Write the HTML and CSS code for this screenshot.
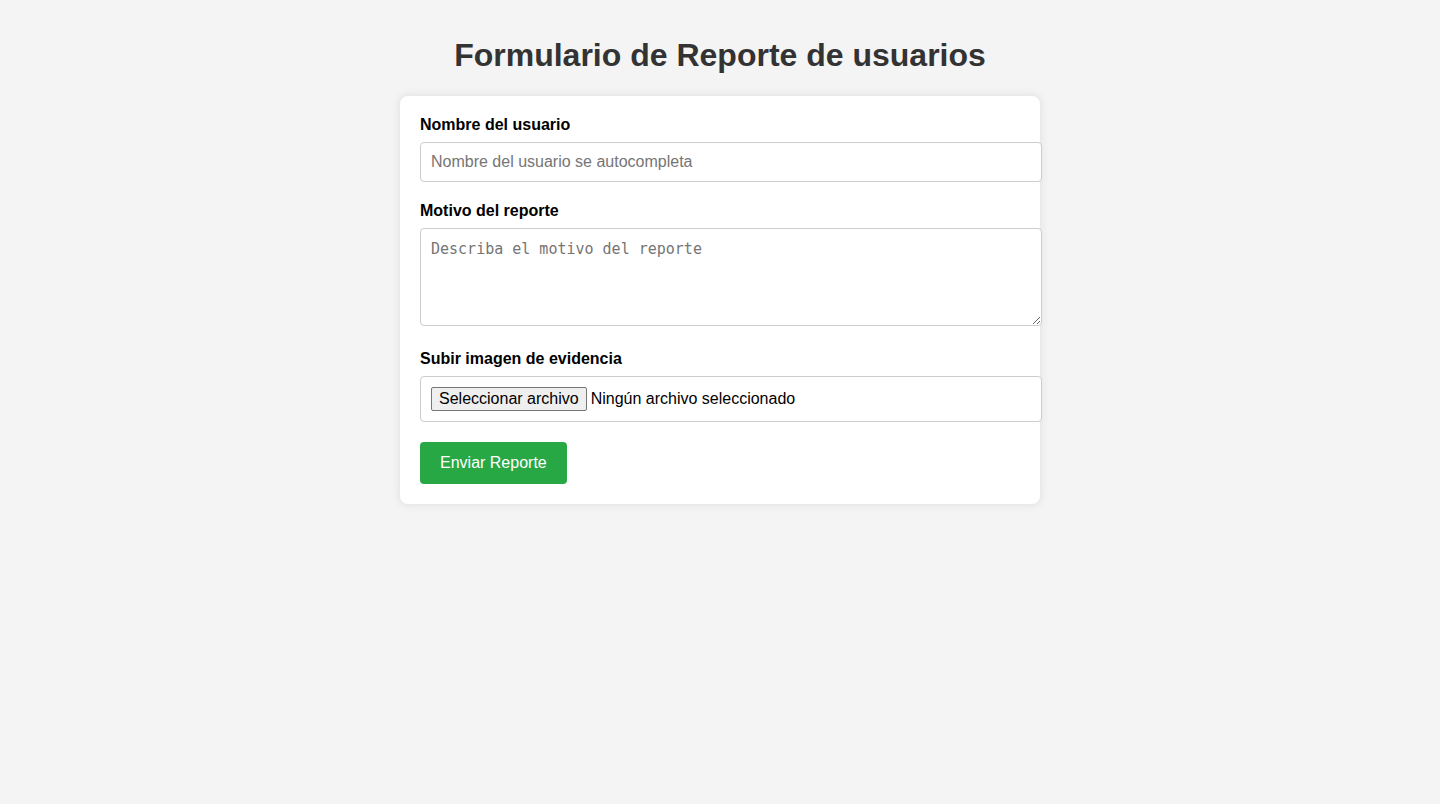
FILE: index.html
```html
<!DOCTYPE html>
<html lang="es">
<head>
  <meta charset="utf-8">
  <meta name="viewport" content="width=device-width, initial-scale=1">
  <title>Formulario de Reporte de usuarios</title>
  <link rel="stylesheet" href="styles.css">
</head>
<body>
  <h1 class="title">Formulario de Reporte de usuarios</h1>
  <form class="report-form">
    <div class="group">
      <label class="label" for="nombre">Nombre del usuario</label>
      <input class="field" type="text" id="nombre" name="nombre" placeholder="Nombre del usuario se autocompleta">
    </div>
    <div class="group group-area">
      <label class="label" for="motivo">Motivo del reporte</label>
      <textarea class="field area" id="motivo" name="motivo" placeholder="Describa el motivo del reporte"></textarea>
    </div>
    <div class="group">
      <label class="label" for="evidencia">Subir imagen de evidencia</label>
      <div class="field file-field">
        <button class="file-button" type="button" tabindex="-1">Seleccionar archivo</button>
        <span class="file-name">Ningún archivo seleccionado</span>
        <input class="file-input" type="file" id="evidencia" name="evidencia" accept="image/*">
      </div>
    </div>
    <button class="submit" type="submit">Enviar Reporte</button>
  </form>
</body>
</html>
```
FILE: styles.css
```css
body {
  margin: 0;
  padding: 36px 20px;
  background: #f4f4f4;
  color: #000;
  font-family: "Liberation Sans", Arial, sans-serif;
  font-size: 16px;
  line-height: 18px;
}

.title {
  margin: 0 0 22px;
  color: #333;
  font-size: 32px;
  line-height: 38px;
  text-align: center;
}

.report-form {
  max-width: 600px;
  margin: 0 auto;
  padding: 20px;
  background: #fff;
  border-radius: 8px;
  box-shadow: 0 0 10px rgba(0, 0, 0, 0.1);
}

.group {
  margin-bottom: 20px;
}

.group-area {
  margin-bottom: 24px;
}

.label {
  display: block;
  margin-bottom: 8px;
  font-weight: bold;
}

.field {
  display: block;
  box-sizing: content-box;
  width: 100%;
  margin: 0;
  padding: 10px;
  border: 1px solid #ccc;
  border-radius: 4px;
  background: #fff;
  font-family: inherit;
  font-size: 16px;
  line-height: 18px;
}

.field::placeholder {
  color: #757575;
}

input.field {
  height: 18px;
}

.area {
  height: 76px;
  font-family: Consolas, "DejaVu Sans Mono", monospace;
  font-size: 15px;
  line-height: 20px;
  resize: vertical;
}

.file-field {
  position: relative;
  display: flex;
  align-items: center;
  gap: 4px;
}

.file-button {
  padding: 2px 7px;
  border: 1px solid #767676;
  border-radius: 2px;
  background: #efefef;
  color: #000;
  font: inherit;
}

.file-input {
  position: absolute;
  inset: 0;
  width: 100%;
  opacity: 0;
}

.submit {
  display: block;
  padding: 12px 20px;
  border: none;
  border-radius: 4px;
  background: #28a745;
  color: #fff;
  font: inherit;
  cursor: pointer;
}
```
